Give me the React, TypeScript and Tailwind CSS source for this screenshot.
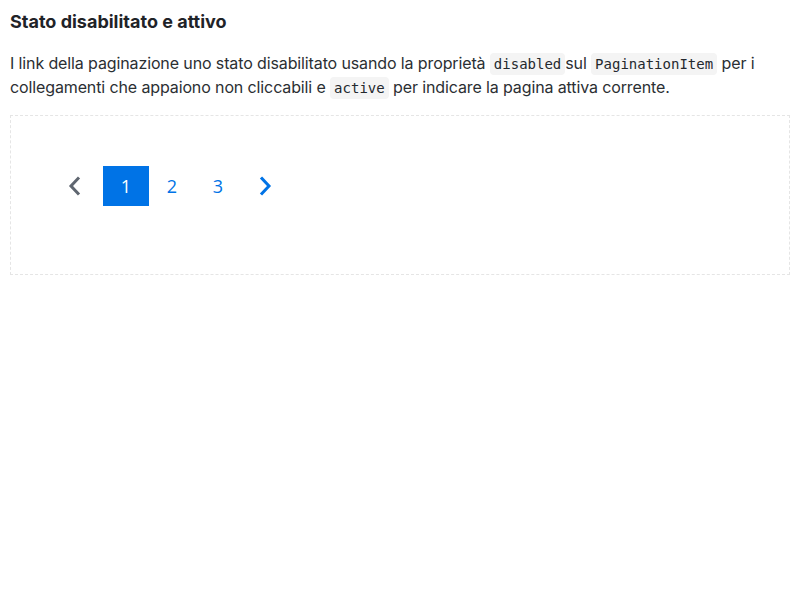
import React from "react";

const Chevron = ({ dir, color }: { dir: "left" | "right"; color: string }) => (
  <svg width="14" height="20" viewBox="0 0 14 20" fill="none">
    <polyline
      points={dir === "left" ? "11,2.5 4,10 11,17.5" : "3,2.5 10,10 3,17.5"}
      stroke={color}
      strokeWidth="3"
      strokeLinecap="square"
      strokeLinejoin="miter"
    />
  </svg>
);

function Code({ children }: { children: React.ReactNode }) {
  return (
    <code className="inline-block rounded-[4px] bg-[#f4f4f4] px-[4px] font-['DejaVu_Sans_Mono',monospace] text-[14px] leading-[22px] tracking-normal text-[#24292e]">
      {children}
    </code>
  );
}

export default function App() {
  return (
    <div className="min-h-screen bg-white px-[10px] pt-[10px] font-['Inter',sans-serif] text-[#24292e]">
      <h3 className="text-[18px] font-bold leading-[24px] text-[#1f2328]">Stato disabilitato e attivo</h3>

      <p className="mt-[17px] text-[16px] leading-[24px] tracking-[-0.12px] text-[#2b2f33]">
        I link della paginazione uno stato disabilitato usando la proprietà <Code>disabled</Code>sul{" "}
        <Code>PaginationItem</Code> per i collegamenti che appaiono non cliccabili e <Code>active</Code> per
        indicare la pagina attiva corrente.
      </p>

      <div className="mt-[16px] h-[160px] w-[780px] border border-dashed border-[#e5e5e5] pl-10 pt-[50px]">
        <nav className="flex items-center font-['Open_Sans',sans-serif] text-[18px]">
          <span className="flex h-10 w-[46px] items-center justify-center">
            <Chevron dir="left" color="#5f6670" />
          </span>
          <span className="ml-[6px] flex h-10 w-[46px] items-center justify-center bg-[#0073e6] text-white">1</span>
          <span className="flex h-10 w-[46px] items-center justify-center text-[#0073e6]">2</span>
          <span className="flex h-10 w-[46px] items-center justify-center text-[#0073e6]">3</span>
          <span className="ml-[2px] flex h-10 w-[46px] items-center justify-center">
            <Chevron dir="right" color="#0073e6" />
          </span>
        </nav>
      </div>
    </div>
  );
}
